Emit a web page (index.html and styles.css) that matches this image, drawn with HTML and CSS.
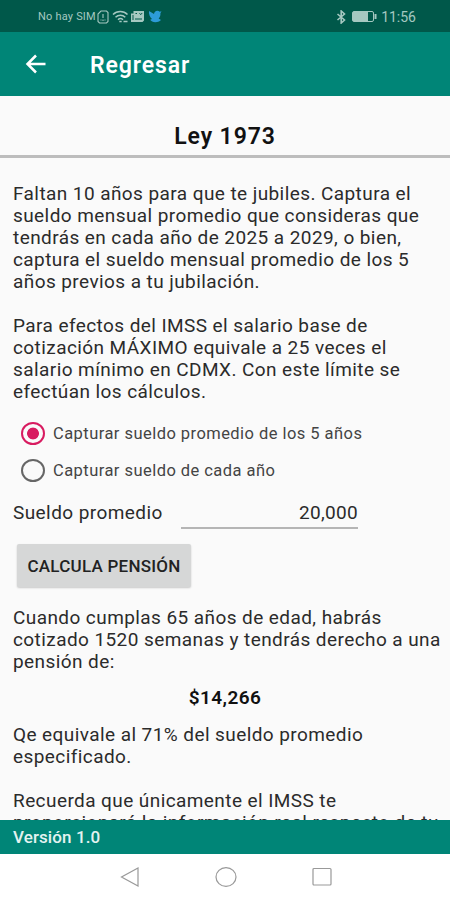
FILE: index.html
```html
<!DOCTYPE html>
<html lang="es">
<head>
  <meta charset="UTF-8">
  <meta name="viewport" content="width=device-width, initial-scale=1.0">
  <title>Ley 1973</title>
  <link rel="stylesheet" href="styles.css">
</head>
<body>
  <div class="pantalla">
    <div class="barra-estado">
      <span class="sin-sim">No hay SIM</span>
      <svg class="ico-sim" width="12" height="14" viewBox="0 0 12 14" fill="none" stroke="#a5c8c1" stroke-width="1.1">
        <path d="M4 1h5.500L11 2.500V11.500L9.500 13H2.500L1 11.500V4z"/>
        <path d="M3.500 10h1M7.500 10h1M6 4v4M6 9.500v1.500"/>
      </svg>
      <svg class="ico-wifi" width="17" height="14" viewBox="0 0 17 14" fill="none" stroke="#a5c8c1" stroke-width="1.500">
        <path d="M1 4.500C5 .5 11.500.5 15.500 4.500M3.500 7.200c2.800-2.700 7-2.700 9.800 0M6 9.700c1.500-1.400 3.500-1.400 5 0"/>
        <path d="M7.300 11.500h2.400M11.500 11.500h4"/>
      </svg>
      <svg class="ico-news" width="15" height="13" viewBox="0 0 15 13">
        <path d="M3.500 1H14v9.500L12.500 12H1V3.500h2.500z" fill="#a5c8c1"/>
        <path d="M5.500 3.500H7M9.500 3.200l1.200 1.500 1.500-1.700M3 5v5M5 9h7" fill="none" stroke="#00584a"/>
      </svg>
      <svg class="ico-ave" width="14" height="13" viewBox="0 0 14 13" fill="#2d9bd8">
        <path d="M1 1l5 3c.2-2 1.500-3.300 3.300-3.300 1 0 1.800.3 2.400 1l1.800-.4-1.100 2c.3 2.200-.5 4-1.800 5.200L13 10l-2 1.500C7.500 13 3.500 12.300 2.200 9.800L4 9C2 7.500.5 4 1 1z"/>
      </svg>
      <div class="estado-der">
        <svg width="11" height="14" viewBox="0 0 11 14" fill="none" stroke="#a5c8c1" stroke-width="1.600">
          <path d="M1.500 4l7 6L5.200 13V1l3.300 3-7 6"/>
        </svg>
        <svg class="ico-bateria" width="25" height="11" viewBox="0 0 25 11">
          <rect x=".5" y=".5" width="21" height="10" rx="1.500" fill="none" stroke="#a5c8c1"/>
          <rect x="1" y="1" width="15" height="9" fill="#a5c8c1"/>
          <rect x="22.500" y="3" width="2" height="5" fill="#a5c8c1"/>
        </svg>
        <span class="hora">11:56</span>
      </div>
    </div>

    <header class="cabecera">
      <svg width="22" height="20" viewBox="0 0 22 20" fill="none" stroke="#fff" stroke-width="2.500">
        <path d="M20.500 10H2.500M11 1.500L2.500 10l8.500 8.500"/>
      </svg>
      <span class="titulo">Regresar</span>
    </header>

    <h1>Ley 1973</h1>

    <main class="contenido">
      <p>Faltan 10 años para que te jubiles. Captura el<br>
        sueldo mensual promedio que consideras que<br>
        tendrás en cada año de 2025 a 2029, o bien,<br>
        captura el sueldo mensual promedio de los 5<br>
        años previos a tu jubilación.</p>
      <p>Para efectos del IMSS el salario base de<br>
        cotización MÁXIMO equivale a 25 veces el<br>
        salario mínimo en CDMX. Con este límite se<br>
        efectúan los cálculos.</p>

      <div class="opciones">
        <label><input type="radio" name="captura" checked>Capturar sueldo promedio de los 5 años</label>
        <label><input type="radio" name="captura">Capturar sueldo de cada año</label>
      </div>

      <div class="campo">
        <label for="sueldo">Sueldo promedio</label>
        <input type="text" id="sueldo" value="20,000">
      </div>

      <button type="button">CALCULA PENSIÓN</button>

      <p class="resultado">Cuando cumplas 65 años de edad, habrás<br>
        cotizado 1520 semanas y tendrás derecho a una<br>
        pensión de:</p>
      <div class="monto">$14,266</div>
      <p>Qe equivale al 71% del sueldo promedio<br>
        especificado.</p>
      <p>Recuerda que únicamente el IMSS te<br>
        proporcionará la información real respecto de tu</p>
    </main>

    <footer class="version">Versión 1.0</footer>

    <nav class="navegacion">
      <svg width="20" height="22" viewBox="0 0 20 22"><path d="M18 2v18L1.500 11z"/></svg>
      <svg width="22" height="22" viewBox="0 0 22 22"><ellipse cx="11" cy="11" rx="10" ry="9.300"/></svg>
      <svg width="20" height="20" viewBox="0 0 20 20"><rect x="1" y="1.500" width="18" height="16.500" rx="1"/></svg>
    </nav>
  </div>
</body>
</html>
```
FILE: styles.css
```css
* {
  box-sizing: border-box;
}

body {
  margin: 0;
  font-family: Roboto, sans-serif;
  font-size: 19px;
  color: #2b2b2b;
  background: #fafafa;
}

.pantalla {
  display: flex;
  flex-direction: column;
  height: 900px;
  overflow: hidden;
}

.barra-estado {
  display: flex;
  align-items: center;
  height: 32px;
  flex-shrink: 0;
  padding: 1px 34px 0 38px;
  background: #00584a;
  color: #a5c8c1;
}

.sin-sim {
  width: 59px;
  font-size: 11px;
  letter-spacing: 0.2px;
  white-space: nowrap;
}

.ico-wifi {
  margin-left: 3px;
}

.ico-news {
  margin-left: 1px;
}

.ico-ave {
  margin-left: 3px;
}

.estado-der {
  display: flex;
  align-items: center;
  margin-left: auto;
}

.ico-bateria {
  margin: 0 4px 0 5px;
}

.hora {
  font-size: 14px;
}

.cabecera {
  display: flex;
  align-items: center;
  height: 64px;
  flex-shrink: 0;
  padding: 2px 0 0 25px;
  background: #008577;
  color: #fff;
}

.cabecera svg {
  margin-top: -2px;
}

.titulo {
  margin-left: 43px;
  font-size: 23px;
  font-weight: 600;
  letter-spacing: 0.9px;
}

h1 {
  height: 62px;
  margin: 0;
  padding-top: 24px;
  flex-shrink: 0;
  border-bottom: 3px solid #bdbdbd;
  font-size: 23px;
  line-height: 33px;
  font-weight: 600;
  letter-spacing: 0.9px;
  text-align: center;
  color: #111;
}

.contenido {
  flex: 1;
  min-height: 0;
  overflow: hidden;
  padding: 25px 0 0 13px;
  line-height: 22px;
  letter-spacing: 0.42px;
  white-space: nowrap;
}

p {
  margin: 0 0 22px;
}

.opciones {
  margin: -10px 0 0 8px;
}

.opciones label {
  display: flex;
  align-items: center;
  height: 37px;
  font-size: 16.500px;
  letter-spacing: 0.45px;
  color: #444;
}

input[type="radio"] {
  appearance: none;
  width: 24px;
  height: 23px;
  margin: 0 8px 0 0;
  border: 2px solid #666;
  border-radius: 50%;
}

input[type="radio"]:checked {
  border-color: #d81b60;
  background: radial-gradient(circle, #d81b60 5.500px, transparent 6.300px);
}

.campo {
  display: flex;
  align-items: center;
  height: 40px;
  margin-top: 4px;
}

.campo label {
  width: 168px;
}

input[type="text"] {
  width: 177px;
  height: 32px;
  padding: 0;
  border: none;
  border-bottom: 2px solid #b5b5b5;
  background: none;
  font: inherit;
  letter-spacing: 0.3px;
  text-align: right;
  color: inherit;
}

button {
  display: block;
  width: 174px;
  height: 43px;
  margin: 11px 0 20px 4px;
  padding: 0;
  border: none;
  border-radius: 2px;
  background: #d6d7d7;
  box-shadow: 0 1px 2px rgba(0, 0, 0, 0.2);
  font-family: inherit;
  font-size: 17px;
  font-weight: 500;
  letter-spacing: 0.25px;
  color: #222;
}

p.resultado {
  margin-bottom: 14px;
}

.monto {
  margin: 0 13px 15px 0;
  font-weight: 600;
  text-align: center;
  color: #111;
}

.version {
  height: 34px;
  flex-shrink: 0;
  padding-left: 13px;
  background: #008577;
  font-size: 17px;
  font-weight: 500;
  line-height: 35px;
  letter-spacing: 0.1px;
  color: #e4f3f1;
}

.navegacion {
  display: flex;
  justify-content: center;
  align-items: center;
  gap: 75px;
  height: 46px;
  flex-shrink: 0;
  padding-left: 1px;
  background: #fff;
}

.navegacion svg {
  fill: none;
  stroke: #999;
  stroke-width: 1.200;
}
```
